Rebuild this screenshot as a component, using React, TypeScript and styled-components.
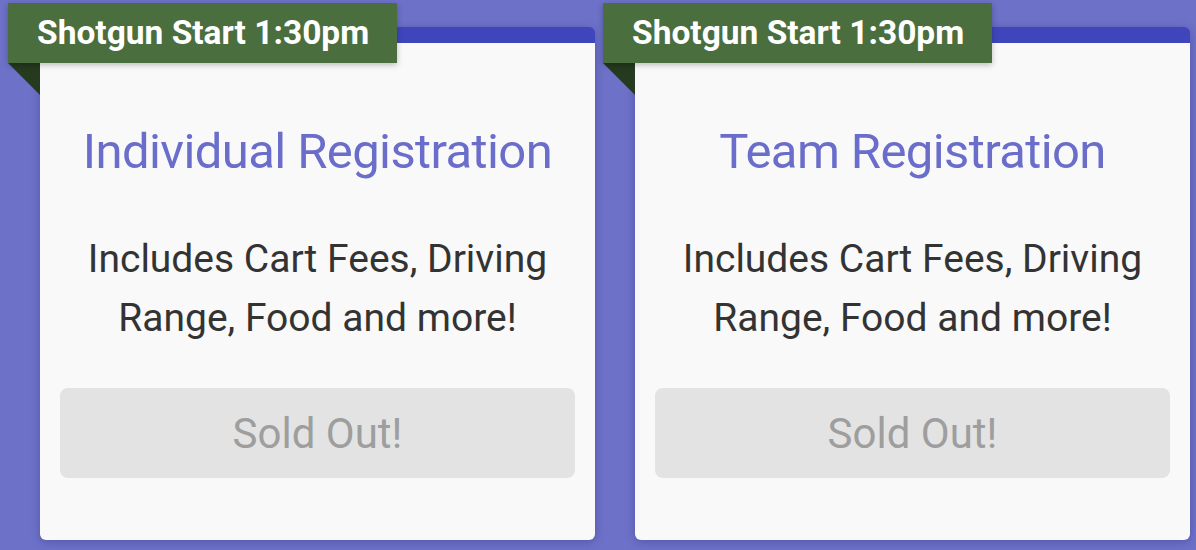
import React from "react";
import styled, { createGlobalStyle } from "styled-components";

const Global = createGlobalStyle`
  html, body { margin: 0; padding: 0; }
  body {
    background: #6d71c8;
    font-family: Roboto, "Noto Sans", sans-serif;
    width: 1196px;
    height: 550px;
    overflow: hidden;
  }
`;

const Row = styled.div`
  display: flex;
  gap: 40px;
  padding: 27px 0 0 40px;
`;

const Card = styled.div`
  position: relative;
  width: 555px;
  height: 513px;
  box-sizing: border-box;
  background: #f9f9f9;
  border-top: 16px solid #3f46bb;
  border-radius: 6px;
  box-shadow: 0 2px 10px rgba(40, 40, 110, 0.35);
  display: flex;
  flex-direction: column;
  align-items: center;
  padding: 0 20px;
`;

const Ribbon = styled.div`
  position: absolute;
  left: -32px;
  top: -40px;
  width: 389px;
  height: 60px;
  box-sizing: border-box;
  background: #4a6e3d;
  color: #fff;
  font-weight: 700;
  font-size: 33.5px;
  line-height: 60px;
  padding-left: 29px;
  white-space: nowrap;
  box-shadow: 0 2px 6px rgba(0, 0, 0, 0.25);
  z-index: 2;
`;

const Fold = styled.div`
  position: absolute;
  left: -32px;
  top: 20px;
  width: 0;
  height: 0;
  border-top: 32px solid #263a1f;
  border-left: 32px solid transparent;
  z-index: 1;
`;

const Title = styled.h2`
  margin: 84px 0 0;
  font-weight: 400;
  font-size: 49px;
  letter-spacing: -0.6px;
  line-height: 50px;
  color: #6a6dca;
  text-align: center;
  white-space: nowrap;
`;

const Body = styled.p`
  margin: 53px 0 0;
  font-size: 39px;
  letter-spacing: 0;
  line-height: 59px;
  color: #333;
  text-align: center;
  max-width: 500px;
`;

const SoldOut = styled.button`
  margin-top: 40px;
  width: 100%;
  height: 90px;
  border: none;
  border-radius: 8px;
  background: #e3e3e3;
  color: #9e9e9e;
  font-family: Roboto, sans-serif;
  font-size: 42px;
  cursor: default;
`;

const items = [
  { title: "Individual Registration" },
  { title: "Team Registration" },
];

export default function App() {
  return (
    <>
      <Global />
      <Row>
        {items.map((it) => (
          <Card key={it.title}>
            <Ribbon>Shotgun Start 1:30pm</Ribbon>
            <Fold />
            <Title>{it.title}</Title>
            <Body>Includes Cart Fees, Driving Range, Food and more!</Body>
            <SoldOut disabled>Sold Out!</SoldOut>
          </Card>
        ))}
      </Row>
    </>
  );
}
